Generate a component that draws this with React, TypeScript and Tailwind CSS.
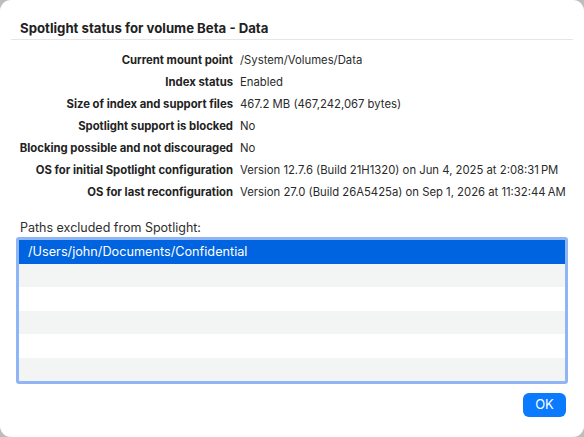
import React from "react";

const rows: [string, string][] = [
  ["Current mount point", "/System/Volumes/Data"],
  ["Index status", "Enabled"],
  ["Size of index and support files", "467.2 MB (467,242,067 bytes)"],
  ["Spotlight support is blocked", "No"],
  ["Blocking possible and not discouraged", "No"],
  ["OS for initial Spotlight configuration", "Version 12.7.6 (Build 21H1320) on Jun 4, 2025 at 2:08:31\u202FPM"],
  ["OS for last reconfiguration", "Version 27.0 (Build 26A5425a) on Sep 1, 2026 at 11:32:44\u202FAM"],
];

export default function App() {
  return (
    <div className="w-[584px] h-[437px] bg-[#bdbdbd] overflow-hidden" style={{ fontFamily: "Inter, 'Noto Sans', sans-serif" }}>
      <div className="w-[584px] h-[437px] bg-white rounded-[11px] flex flex-col">
        <div className="pt-[19px] pl-[20px] h-[37px] text-[13.2px] leading-[18px] font-bold text-[#222]">
          Spotlight status for volume Beta - Data
        </div>
        <div className="mt-[2px] mx-[11px] h-px bg-[#e6e6e6]" />
        <div className="mt-[9px] flex flex-col">
          {rows.map(([k, v]) => (
            <div key={k} className="flex h-[22px] items-center text-[11.3px]">
              <div className="w-[233px] text-right font-bold text-[#222] whitespace-nowrap">{k}</div>
              <div className="pl-[7px] text-[#2a2a2a] whitespace-nowrap">{v}</div>
            </div>
          ))}
        </div>
        <div className="mt-[17px] pl-[20px] h-[17px] text-[12.5px] leading-[16px] text-[#2e2e2e]">
          Paths excluded from Spotlight:
        </div>
        <div className="mx-[16px] h-[147px] border-[3px] border-[#8fb5f5] rounded-[3px] overflow-hidden flex flex-col">
          <div className="h-[23.5px] bg-[#0064e0] text-white text-[12.7px] flex items-center pl-[9px]">
            /Users/john/Documents/Confidential
          </div>
          <div className="h-[23.5px] bg-[#f3f4f4]" />
          <div className="h-[23.5px] bg-white" />
          <div className="h-[23.5px] bg-[#f3f4f4]" />
          <div className="h-[23.5px] bg-white" />
          <div className="h-[23.5px] bg-[#f3f4f4]" />
        </div>
        <div className="mt-[9px] flex justify-end pr-[18px]">
          <div className="w-[43px] h-[24px] rounded-[6px] bg-[#0a7aff] text-white text-[13px] flex items-center justify-center">
            OK
          </div>
        </div>
      </div>
    </div>
  );
}
